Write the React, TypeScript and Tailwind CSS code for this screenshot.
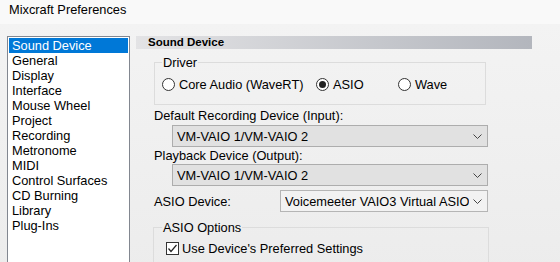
import React from 'react';

const pages = [
  'Sound Device',
  'General',
  'Display',
  'Interface',
  'Mouse Wheel',
  'Project',
  'Recording',
  'Metronome',
  'MIDI',
  'Control Surfaces',
  'CD Burning',
  'Library',
  'Plug-Ins',
];

const Chevron = () => (
  <svg width="9" height="5" viewBox="0 0 9 5" className="shrink-0">
    <polyline points="0.5,0.5 4.5,4.5 8.5,0.5" fill="none" stroke="#444" strokeWidth="1" />
  </svg>
);

const Radio = ({ checked, label, width }: { checked?: boolean; label: string; width: string }) => (
  <div className={`flex items-center gap-[4px] ${width}`}>
    <span className="flex h-[13px] w-[13px] shrink-0 items-center justify-center rounded-full border border-[#333] bg-white">
      {checked && <span className="h-[7px] w-[7px] rounded-full bg-[#222]" />}
    </span>
    <span>{label}</span>
  </div>
);

const Select = ({ value, width, light }: { value: string; width: string; light?: boolean }) => (
  <div
    className={`flex h-[22px] items-center justify-between border pl-[4px] pr-[5px] ${width} ${
      light ? 'border-[#b5b5b5] bg-[#f2f2f2]' : 'border-[#adadad] bg-[#e1e1e1]'
    }`}
  >
    <span className="truncate">{value}</span>
    <Chevron />
  </div>
);

export default function App() {
  return (
    <div className="h-[262px] w-[560px] overflow-hidden bg-[#f0f0f0] font-['Liberation_Sans',Arial,sans-serif] text-[12.8px] leading-[15px] text-black">
      {/* title */}
      <div className="h-[24px] bg-[#f9f9f9] pl-[9px] pt-[2px]">Mixcraft Preferences</div>

      <div className="flex bg-gradient-to-b from-[#f3f3f3] to-[#ececec] pt-[12px]">
        {/* page list */}
        <div className="ml-[7px] h-[240px] w-[123px] shrink-0 border border-[#828790] bg-white p-[1px]">
          {pages.map((p, i) => (
            <div
              key={p}
              className={`h-[15px] pl-[3px] ${i === 0 ? 'bg-[#0078d7] text-white' : ''}`}
            >
              {p}
            </div>
          ))}
        </div>

        {/* settings panel */}
        <div className="ml-[6px] flex w-[396px] flex-col">
          <div className="h-[13px] bg-gradient-to-r from-[#e3e3e5] to-[#b3b6bd] pl-[12px] text-[11.5px] leading-[13px] font-bold">
            Sound Device
          </div>

          <fieldset className="ml-[18px] mt-[6px] w-[332px] border border-[#dcdcdc] pb-[12px] pl-[7px] pt-[7px]">
            <legend className="px-[1px]">Driver</legend>
            <div className="flex h-[15px] items-center">
              <Radio label="Core Audio (WaveRT)" width="w-[154px]" />
              <Radio label="ASIO" checked width="w-[82px]" />
              <Radio label="Wave" width="w-[80px]" />
            </div>
          </fieldset>

          <div className="ml-[18px] mt-[3px] h-[16px] leading-[16px]">Default Recording Device (Input):</div>
          <div className="ml-[36px] mt-[1px]">
            <Select value="VM-VAIO 1/VM-VAIO 2" width="w-[316px]" />
          </div>
          <div className="ml-[18px] h-[17px] leading-[17px]">Playback Device (Output):</div>
          <div className="ml-[36px]">
            <Select value="VM-VAIO 1/VM-VAIO 2" width="w-[316px]" />
          </div>

          <div className="ml-[18px] mt-[4px] flex items-center">
            <span className="w-[126px]">ASIO Device:</span>
            <Select value="Voicemeeter VAIO3 Virtual ASIO" width="w-[208px]" light />
          </div>

          <fieldset className="ml-[17px] mt-[8px] w-[336px] border border-[#dcdcdc] pb-[20px] pl-[12px] pt-[6px]">
            <legend className="-ml-[4px] px-[1px]">ASIO Options</legend>
            <div className="flex items-center gap-[3px]">
              <span className="flex h-[13px] w-[13px] items-center justify-center border border-[#333] bg-white">
                <svg width="11" height="11" viewBox="0 0 11 11">
                  <polyline points="1.5,5.5 4,8.5 9.5,2" fill="none" stroke="#222" strokeWidth="1.2" />
                </svg>
              </span>
              <span>Use Device's Preferred Settings</span>
            </div>
          </fieldset>
        </div>
      </div>
    </div>
  );
}
